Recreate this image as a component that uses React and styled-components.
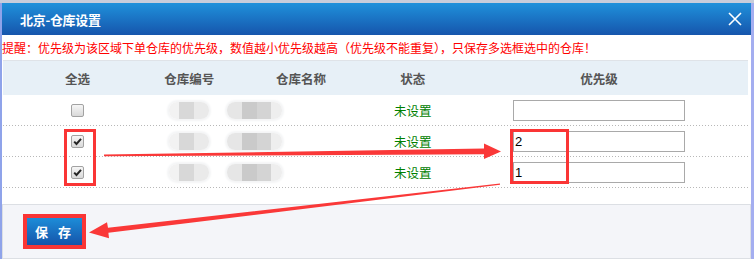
import React from 'react';
import styled, { createGlobalStyle } from 'styled-components';

const GlobalStyle = createGlobalStyle`
  html, body {
    margin: 0;
    padding: 0;
  }
  body {
    width: 754px;
    height: 259px;
    overflow: hidden;
    background: #c7cddb;
    font-family: "Noto Sans CJK SC", "Microsoft YaHei", sans-serif;
  }
`;

const Page = styled.div`
  position: relative;
  width: 754px;
  height: 259px;
  padding-top: 3px;
  box-sizing: border-box;
`;

const Dialog = styled.div`
  height: 256px;
  background: #fff;
  border-left: 2px solid #8fa3ea;
  border-right: 3px solid #a4aef0;
  box-sizing: border-box;
  display: flex;
  flex-direction: column;
`;

const Header = styled.div`
  height: 32px;
  flex-shrink: 0;
  display: flex;
  align-items: center;
  justify-content: space-between;
  padding: 0 9px 0 18px;
  background: linear-gradient(#1f91db, #1655ac);
`;

const Title = styled.div`
  color: #fff;
  font-size: 13px;
  font-weight: bold;
  letter-spacing: -0.3px;
`;

const CloseButton = styled.div`
  width: 14px;
  height: 14px;
  display: flex;
  cursor: pointer;
`;

const Notice = styled.div`
  height: 25px;
  flex-shrink: 0;
  line-height: 25px;
  color: #ff0000;
  font-size: 12px;
  white-space: nowrap;
  overflow: hidden;
`;

const Table = styled.div`
  margin: 0 3px 0 1px;
`;

const Row = styled.div`
  display: grid;
  grid-template-columns: 2fr 1fr 2fr 1fr 4fr;
  height: ${p => (p.head ? '35px' : '31px')};
  box-sizing: border-box;
  background-color: ${p => (p.head ? '#e7f0f7' : '#fff')};
  border-top: ${p => (p.head ? '1px solid #dfe3e8' : 'none')};
  padding-bottom: ${p => (p.head ? '0' : '1px')};
  background-image: ${p =>
    p.head ? 'none' : 'linear-gradient(to right, #b8b8b8 1px, transparent 1px)'};
  background-size: 3px 1px;
  background-repeat: repeat-x;
  background-position: left bottom;
`;

const Cell = styled.div`
  display: flex;
  align-items: center;
  justify-content: ${p => p.align || 'center'};
  font-size: ${p => (p.head ? '12.5px' : '12.5px')};
  font-weight: ${p => (p.head ? 'bold' : 'normal')};
  color: ${p => (p.head ? '#555' : '#333')};
`;

const Status = styled.span`
  color: #008000;
  font-size: 12.5px;
`;

const Box = styled.span`
  width: 11px;
  height: 11px;
  border: 1px solid #a2a2a2;
  border-radius: 2px;
  background: linear-gradient(#f6f6f6, #d9d9d9);
  display: flex;
  align-items: center;
  justify-content: center;
`;

const Blur = styled.span`
  display: block;
  width: ${p => p.w}px;
  height: ${p => p.h || 17}px;
  border-radius: 8px;
  background: ${p => p.bg};
  box-shadow: 0 0 2px 2px #f4f5f6;
  filter: blur(0.4px);
`;

const Field = styled.input`
  width: 172px;
  height: 21px;
  box-sizing: border-box;
  border: 1px solid #a9a9a9;
  padding: 0 1px;
  font-family: "Liberation Sans", Arial, sans-serif;
  font-size: 13px;
  color: #000;
  background: #fff;
  outline: none;
`;

const Footer = styled.div`
  margin-top: 16px;
  height: 55px;
  flex-shrink: 0;
  box-sizing: border-box;
  border: 1px solid #dcdfe4;
  background: #f4f5f9;
  padding: 12px 0 0 24px;
`;

const SaveButton = styled.button`
  width: 56px;
  height: 29px;
  border: none;
  padding: 0 0 0 8px;
  text-align: left;
  letter-spacing: 10px;
  background: linear-gradient(#1d8fda, #1552a8);
  color: #fff;
  font-family: "Noto Sans CJK SC", sans-serif;
  font-size: 13px;
  font-weight: bold;
  cursor: pointer;
`;

const Overlay = styled.svg`
  position: absolute;
  left: 0;
  top: 0;
  pointer-events: none;
`;

const codeBg = 'linear-gradient(to right, #f2f2f2 0 25%, #d8d8d8 25% 62%, #eaeaea 62% 100%)';
const nameBg =
  'linear-gradient(to right, #e6e6e6 0 27%, #cacaca 27% 54%, #d4d4d4 54% 80%, #eeeeee 80% 100%)';

const rows = [
  { checked: false, priority: '' },
  { checked: true, priority: '2' },
  { checked: true, priority: '1' },
];

const Check = ({ checked }) => (
  <Box>
    {checked && (
      <svg width="9" height="9" viewBox="0 0 9 9">
        <path d="M1.2 4.6 L3.5 7 L8 1.8" fill="none" stroke="#262626" strokeWidth="2" />
      </svg>
    )}
  </Box>
);

const App = () => (
  <>
    <GlobalStyle />
    <Page>
      <Dialog>
        <Header>
          <Title>北京-仓库设置</Title>
          <CloseButton>
            <svg width="14" height="14" viewBox="0 0 14 14">
              <path d="M1 1 L13 13 M13 1 L1 13" stroke="#fff" strokeWidth="1.6" />
            </svg>
          </CloseButton>
        </Header>
        <Notice>
          提醒：优先级为该区域下单仓库的优先级，数值越小优先级越高（优先级不能重复），只保存多选框选中的仓库！
        </Notice>
        <Table>
          <Row head>
            <Cell head>全选</Cell>
            <Cell head>仓库编号</Cell>
            <Cell head>仓库名称</Cell>
            <Cell head>状态</Cell>
            <Cell head>优先级</Cell>
          </Row>
          {rows.map((r, i) => (
            <Row key={i}>
              <Cell>
                <Check checked={r.checked} />
              </Cell>
              <Cell>
                <Blur w={40} bg={codeBg} />
              </Cell>
              <Cell align="flex-start">
                <Blur w={55} bg={nameBg} />
              </Cell>
              <Cell>
                <Status>未设置</Status>
              </Cell>
              <Cell>
                <Field defaultValue={r.priority} />
              </Cell>
            </Row>
          ))}
        </Table>
        <Footer>
          <SaveButton>保存</SaveButton>
        </Footer>
      </Dialog>

      <Overlay width="754" height="259" viewBox="0 0 754 259">
        <g fill="none" stroke="#fa3535">
          <rect x="65.5" y="130.5" width="29" height="54" strokeWidth="3" />
          <rect x="511.5" y="130.5" width="56" height="52" strokeWidth="3" />
          <rect x="25" y="216" width="59" height="31" strokeWidth="4" />
        </g>
        <g fill="#fa3838">
          <polygon points="104,154.6 484,148.6 484,143.6 501,151.6 484,159 484,154.2 104,156.2" />
          <polygon points="500,183.4 108,227.7 107,222.3 89,232.5 109,238.2 108.4,232.7 500,184.8" />
        </g>
      </Overlay>
    </Page>
  </>
);

export default App;
